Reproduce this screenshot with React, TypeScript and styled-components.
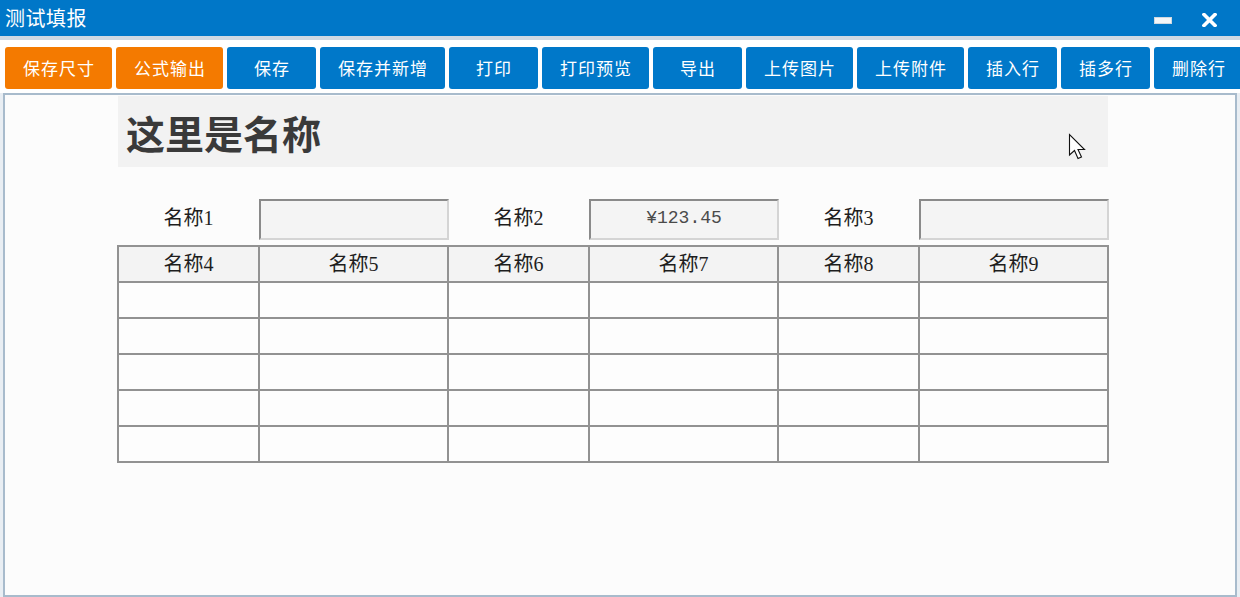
import React from 'react';
import styled, { createGlobalStyle } from 'styled-components';

const GlobalStyle = createGlobalStyle`
  html, body {
    margin: 0;
    padding: 0;
    background: #e9eef3;
  }
  * { box-sizing: border-box; }
`;

const CJK = `"Noto Sans CJK SC", "Noto Sans", sans-serif`;
const SERIF_CJK = `"Liberation Serif", "Noto Sans CJK SC", serif`;

const Window = styled.div`
  width: 1240px;
  height: 597px;
  display: flex;
  flex-direction: column;
  background: #e9eef3;
  position: relative;
  overflow: hidden;
`;

const TitleBar = styled.div`
  height: 36px;
  background: #0077c8;
  display: flex;
  align-items: center;
  justify-content: space-between;
  padding: 0 23px 0 5px;
`;

const TitleText = styled.div`
  color: #fff;
  font-family: ${CJK};
  font-size: 20px;
  line-height: 36px;
  letter-spacing: 0.5px;
`;

const WinControls = styled.div`
  display: flex;
  align-items: center;
  gap: 30px;
  padding-top: 4px;
`;

const Toolbar = styled.div`
  border-top: 4px solid #cfd9e3;
  background: #fff;
  display: flex;
  gap: 4px;
  padding: 7px 0 4px 5px;
  white-space: nowrap;
`;

const ToolButton = styled.button<{ $tone?: 'orange' | 'blue' }>`
  flex: none;
  height: 42px;
  min-width: 89px;
  padding: 0 17px 0 18px;
  border: none;
  border-radius: 3px;
  background: ${(p) => (p.$tone === 'orange' ? '#f47a00' : '#0078c9')};
  color: #fff;
  font-family: ${CJK};
  font-size: 17px;
  letter-spacing: 1px;
  line-height: 42px;
  cursor: pointer;
`;

const Panel = styled.div`
  flex: 1;
  margin: 0 3px 0 3px;
  border: 2px solid #a8bbcc;
  background: #fcfcfc;
  padding: 1px 0 0 113px;
  display: flex;
  flex-direction: column;
`;

const FormTitle = styled.div`
  width: 990px;
  height: 71px;
  background: #f2f2f2;
  display: flex;
  align-items: center;
  padding-left: 8px;
  font-family: ${CJK};
  font-weight: 700;
  font-size: 39px;
  color: #3a3a3a;
`;

const FieldRow = styled.div`
  margin-top: 32px;
  width: 990px;
  height: 41px;
  display: grid;
  grid-template-columns: 141px 189px 141px 189px 141px 189px;
  align-items: stretch;
`;

const FieldLabel = styled.div`
  display: flex;
  align-items: center;
  justify-content: center;
  padding-bottom: 7px;
  font-family: ${SERIF_CJK};
  font-size: 20px;
  color: #1e1e1e;
`;

const FieldInput = styled.div`
  width: 190px;
  background: #f4f4f4;
  border-top: 2px solid #8a8a8a;
  border-left: 2px solid #8a8a8a;
  border-bottom: 2px solid #d4d4d4;
  border-right: 2px solid #d4d4d4;
  display: flex;
  align-items: center;
  justify-content: center;
  padding-bottom: 3px;
  font-family: "Liberation Mono", monospace;
  font-size: 18px;
  color: #4a4a4a;
`;

const Grid = styled.table`
  margin-top: 5px;
  margin-left: -1px;
  width: 992px;
  border-collapse: collapse;
  table-layout: fixed;
`;

const HeadCell = styled.th`
  height: 36px;
  border: 2px solid #929292;
  background: #f3f3f3;
  font-family: ${SERIF_CJK};
  font-weight: 400;
  font-size: 20px;
  color: #1e1e1e;
  text-align: center;
  padding: 0 0 4px;
`;

const Cell = styled.td`
  height: 36px;
  border: 2px solid #929292;
  background: #fdfdfd;
  padding: 0;
`;

const Cursor = styled.svg`
  position: absolute;
  left: 1068px;
  top: 133px;
  pointer-events: none;
`;

const buttons: { label: string; tone?: 'orange' }[] = [
  { label: '保存尺寸', tone: 'orange' },
  { label: '公式输出', tone: 'orange' },
  { label: '保存' },
  { label: '保存并新增' },
  { label: '打印' },
  { label: '打印预览' },
  { label: '导出' },
  { label: '上传图片' },
  { label: '上传附件' },
  { label: '插入行' },
  { label: '插多行' },
  { label: '删除行' },
];

const colWidths = [141, 189, 141, 189, 141, 189];
const headers = ['名称4', '名称5', '名称6', '名称7', '名称8', '名称9'];

export default function App() {
  return (
    <>
      <GlobalStyle />
      <Window>
        <TitleBar>
          <TitleText>测试填报</TitleText>
          <WinControls>
            <svg width="18" height="8" viewBox="0 0 18 8">
              <rect x="0.5" y="1.5" width="17" height="6" fill="#f4f6f8" stroke="#cfd8e0" strokeWidth="1" />
            </svg>
            <svg width="15" height="14" viewBox="0 0 15 14">
              <path d="M2 1.5 L13 12.5 M13 1.5 L2 12.5" stroke="#fff" strokeWidth="3.6" strokeLinecap="square" />
            </svg>
          </WinControls>
        </TitleBar>
        <Toolbar>
          {buttons.map((b) => (
            <ToolButton key={b.label} $tone={b.tone}>
              {b.label}
            </ToolButton>
          ))}
        </Toolbar>
        <Panel>
          <FormTitle>这里是名称</FormTitle>
          <FieldRow>
            <FieldLabel>名称1</FieldLabel>
            <FieldInput />
            <FieldLabel>名称2</FieldLabel>
            <FieldInput>¥123.45</FieldInput>
            <FieldLabel>名称3</FieldLabel>
            <FieldInput />
          </FieldRow>
          <Grid>
            <colgroup>
              {colWidths.map((w, i) => (
                <col key={i} style={{ width: w }} />
              ))}
            </colgroup>
            <thead>
              <tr>
                {headers.map((h) => (
                  <HeadCell key={h}>{h}</HeadCell>
                ))}
              </tr>
            </thead>
            <tbody>
              {[0, 1, 2, 3, 4].map((r) => (
                <tr key={r}>
                  {headers.map((h) => (
                    <Cell key={h} />
                  ))}
                </tr>
              ))}
            </tbody>
          </Grid>
        </Panel>
        <Cursor width="20" height="30" viewBox="0 0 20 30">
          <path
            d="M1.5 1.5 L1.5 22 L6.5 17.5 L10 25.5 L13.5 24 L10 16.5 L16.5 16.5 Z"
            fill="#fff"
            stroke="#111"
            strokeWidth="1.1"
            strokeLinejoin="miter"
          />
        </Cursor>
      </Window>
    </>
  );
}
